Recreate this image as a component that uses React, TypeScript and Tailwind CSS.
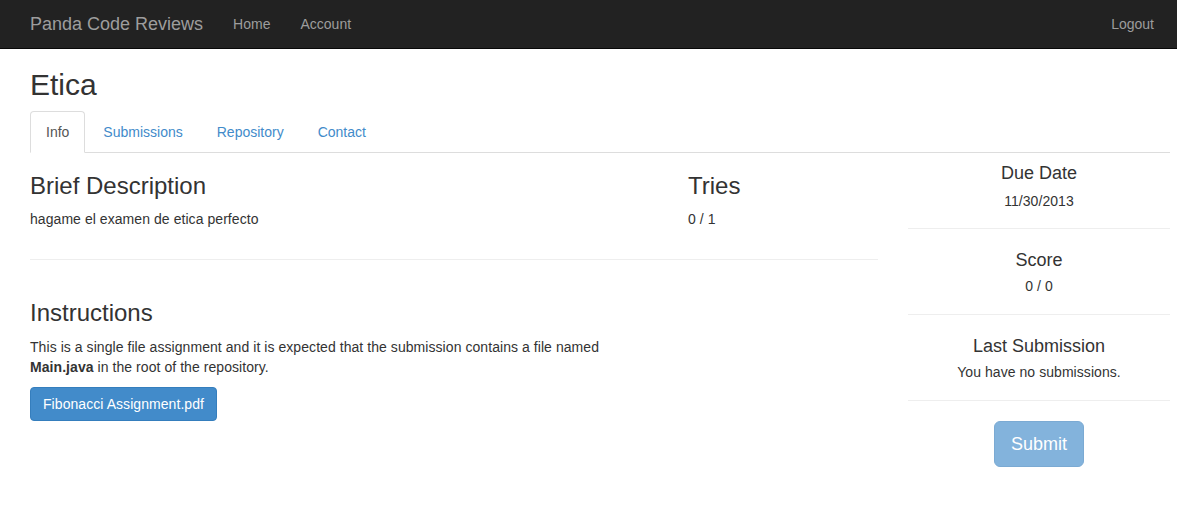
import React from "react";

function SideSection({ title, value, first }: { title: string; value: string; first?: boolean }) {
  return (
    <div className="flex flex-col">
      <h4 className={`${first ? "mt-[10px]" : "mt-[21px]"} text-[18px] leading-[20px] font-normal text-[#333]`}>{title}</h4>
      <p className={`${first ? "mt-[8px]" : "mt-[6px]"} text-[14px] leading-[20px] tracking-[0.06px]`}>{value}</p>
      <hr className={`${first ? "mt-[17px]" : "mt-[18px]"} border-0 border-t border-[#eee]`} />
    </div>
  );
}

export default function App() {
  return (
    <div
      className="min-h-screen w-full overflow-hidden bg-white text-[14px] leading-[20px] text-[#333]"
      style={{ fontFamily: '"Liberation Sans", Arial, Helvetica, sans-serif' }}
    >
      {/* Navbar */}
      <nav className="flex h-[49px] items-center border-b border-[#080808] bg-[#222] pb-[1px] pl-[15px] pr-[8px]">
        <a className="px-[15px] text-[18px] leading-[20px] text-[#9d9d9d]">Panda Code Reviews</a>
        <a className="px-[15px] text-[14px] leading-[20px] text-[#9d9d9d]">Home</a>
        <a className="px-[15px] text-[14px] leading-[20px] text-[#9d9d9d]">Account</a>
        <div className="flex-1" />
        <a className="px-[15px] text-[14px] leading-[20px] text-[#9d9d9d]">Logout</a>
      </nav>

      <div className="flex w-[1140px] flex-col pl-[30px] box-content">
        <h2 className="mt-[19px] mb-[10px] text-[30px] leading-[33px] font-normal">Etica</h2>

        {/* Tabs */}
        <ul className="flex border-b border-[#ddd]">
          <li className="-mb-px mr-[2px]">
            <a className="block rounded-t-[4px] border border-[#ddd] border-b-white bg-white px-[15px] py-[10px] leading-[20px] text-[#555]">
              Info
            </a>
          </li>
          {["Submissions", "Repository", "Contact"].map((t) => (
            <li key={t} className="-mb-px mr-[2px]">
              <a className="block rounded-t-[4px] border border-transparent px-[15px] py-[10px] leading-[20px] text-[#428bca]">
                {t}
              </a>
            </li>
          ))}
        </ul>

        <div className="flex">
          {/* Main column */}
          <div className="flex w-[848px] flex-col">
            <div className="flex">
              <div className="flex w-[628px] flex-col">
                <h3 className="mt-[20px] mb-[10px] text-[24px] leading-[26.4px] font-normal">Brief Description</h3>
                <p className="mb-[10px] tracking-[0.06px]">hagame el examen de etica perfecto</p>
              </div>
              <div className="ml-[30px] flex flex-1 flex-col">
                <h3 className="mt-[20px] mb-[10px] text-[24px] leading-[26.4px] font-normal">Tries</h3>
                <p className="mb-[10px] tracking-[0.06px]">0 / 1</p>
              </div>
            </div>
            <hr className="mt-[20px] mb-[20px] border-0 border-t border-[#eee]" />
            <div className="flex w-[628px] flex-col items-start">
              <h3 className="mt-[20px] mb-[10px] text-[24px] leading-[26.4px] font-normal">Instructions</h3>
              <p className="mb-[10px] tracking-[0.06px]">
                This is a single file assignment and it is expected that the submission contains a file named{" "}
                <strong className="font-bold">Main.java</strong> in the root of the repository.
              </p>
              <button className="rounded-[4px] border border-[#357ebd] bg-[#428bca] px-[12px] py-[6px] text-[14px] leading-[20px] tracking-[0.06px] text-white">
                Fibonacci Assignment.pdf
              </button>
            </div>
          </div>

          {/* Sidebar */}
          <div className="ml-[30px] flex w-[262px] flex-col text-center">
            <SideSection first title="Due Date" value="11/30/2013" />
            <SideSection title="Score" value="0 / 0" />
            <SideSection title="Last Submission" value="You have no submissions." />
            <div className="mt-[20px] flex justify-center">
              <button
                disabled
                className="cursor-not-allowed rounded-[6px] border border-[#357ebd] bg-[#428bca] px-[16px] py-[10px] text-[18px] leading-[24px] text-white opacity-65"
              >
                Submit
              </button>
            </div>
          </div>
        </div>
      </div>
    </div>
  );
}
